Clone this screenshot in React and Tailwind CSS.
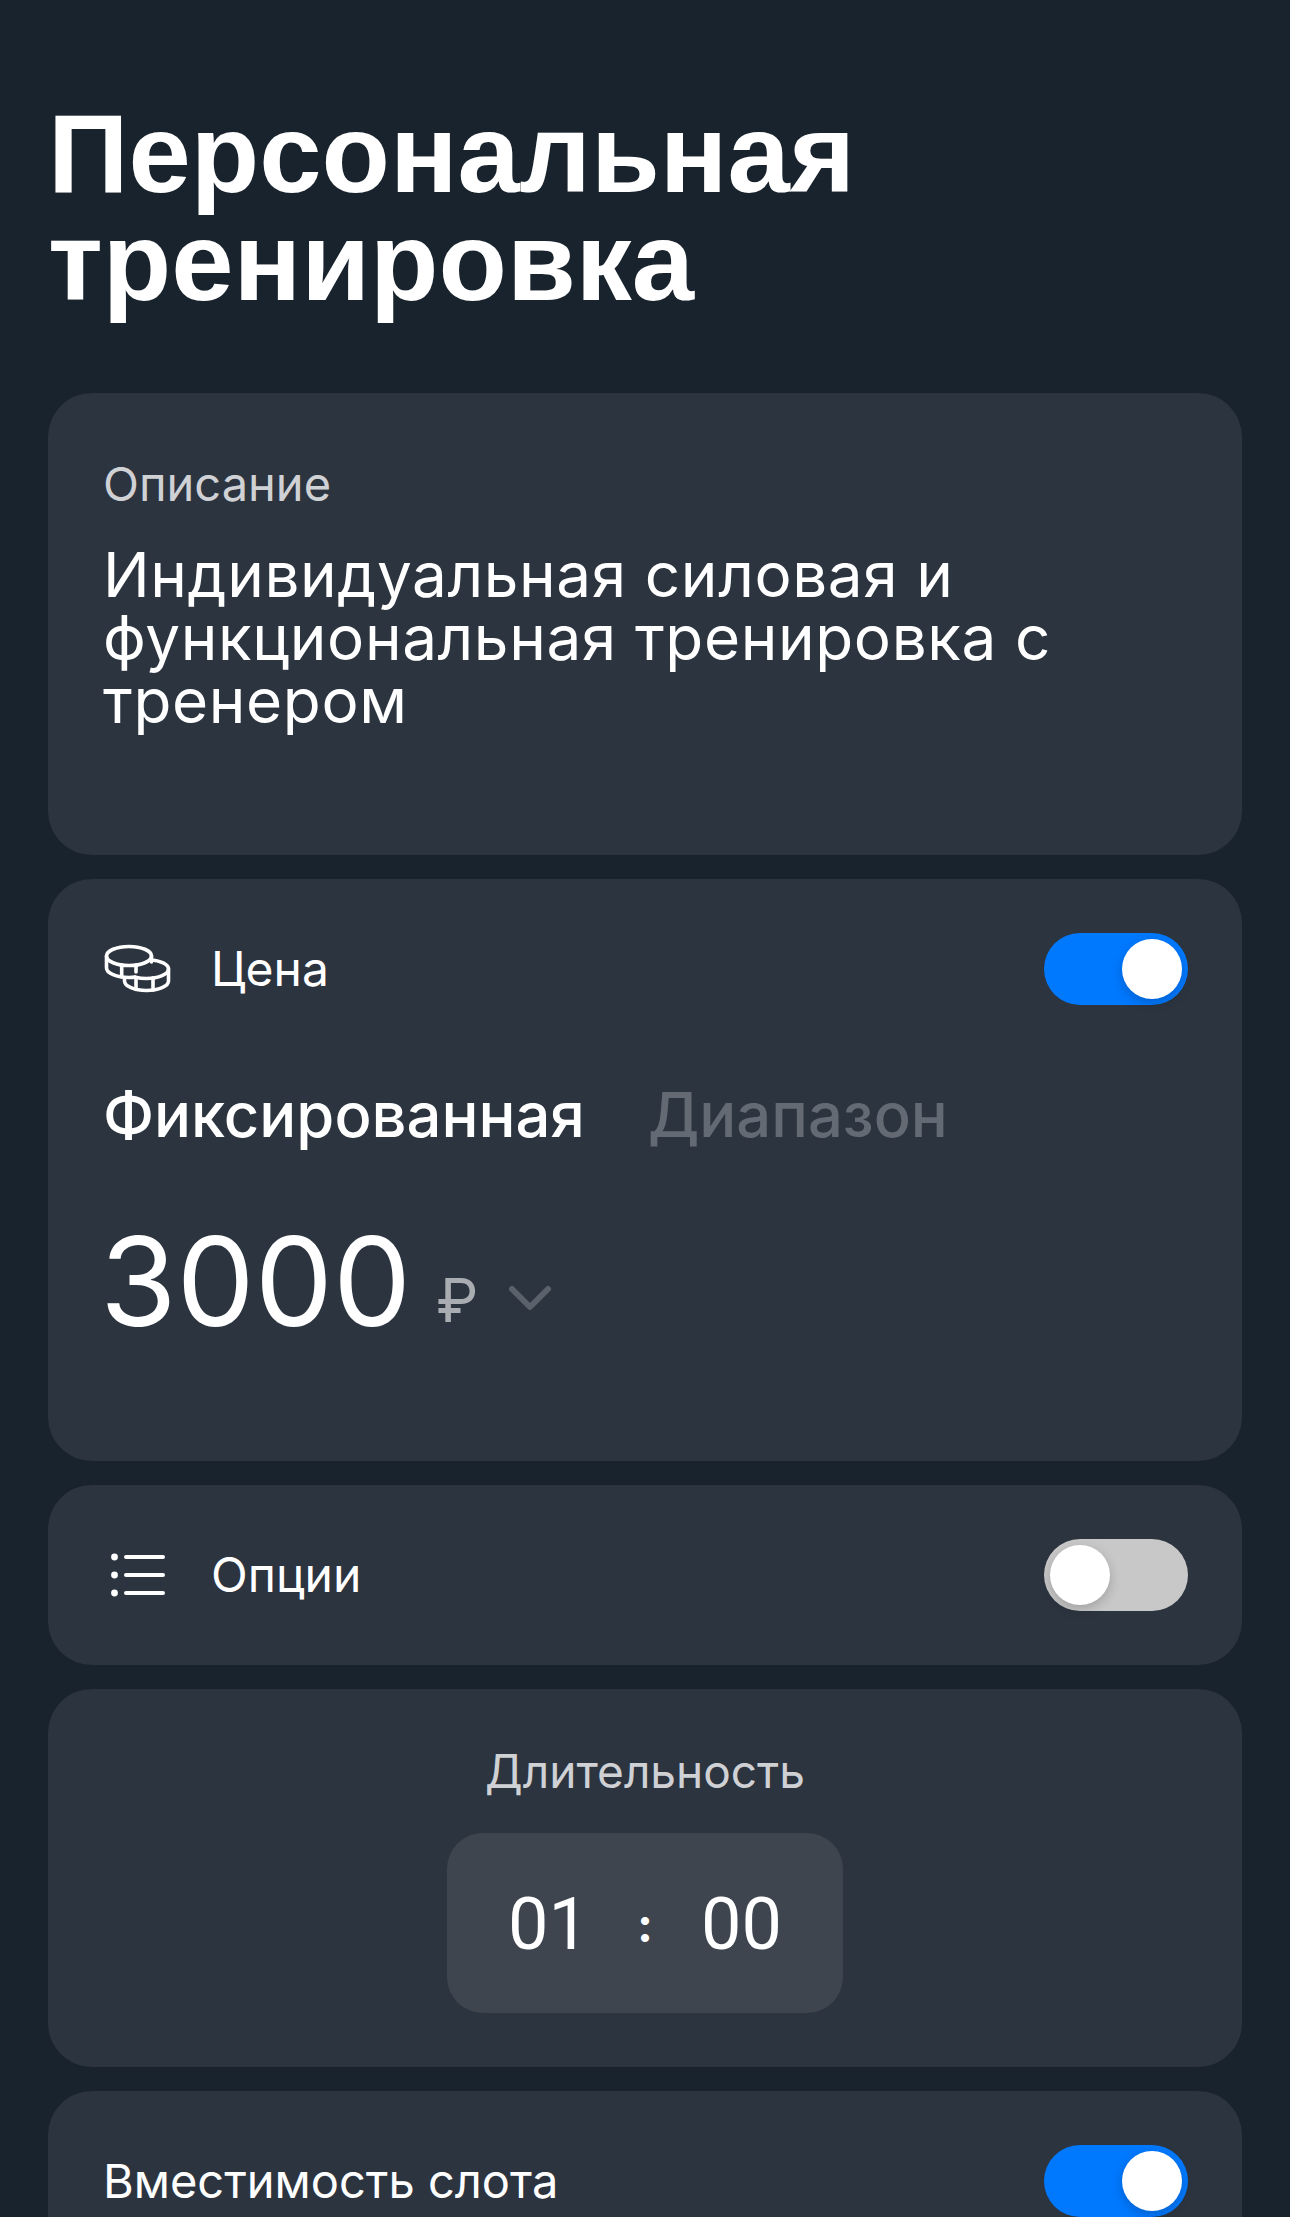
const FONT = "font-['Inter',sans-serif]"

function Toggle({ on }) {
  return (
    <div className={`relative h-[72px] w-[144px] shrink-0 rounded-full ${on ? 'bg-[#0079ff]' : 'bg-[#c8c8c8]'}`}>
      <div
        className={`absolute top-[6px] h-[60px] w-[60px] rounded-full bg-white shadow-[0_4px_12px_rgba(0,0,0,0.2)] ${on ? 'right-[6px]' : 'left-[6px]'}`}
      />
    </div>
  )
}

function CoinsIcon() {
  return (
    <svg width="70" height="50" viewBox="0 0 70 50" fill="none" stroke="white" strokeWidth="3.600" strokeLinejoin="round" strokeLinecap="round">
      {/* left coin */}
      <ellipse cx="26" cy="12" rx="22.500" ry="9.500" />
      <path d="M3.500 12v12c0 5.200 10 9.500 22.500 9.500 2 0 4-.1 6-.4M48.500 12v6" />
      <path d="M18.700 21v12M33 21v7" />
      {/* right coin */}
      <path d="M47 15.700c10.500.8 18.500 4.600 18.500 9.300 0 5.200-9.800 9.500-22 9.500-4 0-7.800-.5-11-1.300" />
      <path d="M21.500 35v2c0 5.200 9.800 9.500 22 9.500s22-4.300 22-9.500V25" />
      <path d="M33 34v11.500M50 34v12" />
    </svg>
  )
}

function ListIcon() {
  return (
    <svg width="54" height="44" viewBox="0 0 54 44" fill="white">
      <circle cx="3.500" cy="4" r="3.400" />
      <circle cx="3.500" cy="22" r="3.400" />
      <circle cx="3.500" cy="40" r="3.400" />
      <rect x="13" y="2" width="41" height="4" rx="2" />
      <rect x="13" y="20" width="41" height="4" rx="2" />
      <rect x="13" y="38" width="41" height="4" rx="2" />
    </svg>
  )
}

function Card({ className = '', children }) {
  return <section className={`rounded-[44px] bg-[#2c343f] ${className}`}>{children}</section>
}

export default function App() {
  return (
    <div className={`h-[2217px] overflow-hidden bg-[#19232d] px-[48px] pt-[100px] text-white ${FONT}`}>
      <h1 className="font-['Liberation_Sans',sans-serif] text-[112px] leading-[108px] font-bold">
        Персональная тренировка
      </h1>

      <div className="mt-[77px] flex flex-col gap-[24px]">
        <Card className="h-[462px] pr-[54px] pl-[55px] pt-[65px]">
          <p className="text-[47px] leading-[52px] text-[#cfd1d4]">Описание</p>
          <p className="mt-[33px] text-[62px] leading-[63px] tracking-[0.01em]">
            Индивидуальная силовая и функциональная тренировка с тренером
          </p>
        </Card>

        <Card className="h-[582px] pr-[54px] pl-[55px] pt-[54px]">
          <div className="flex items-center justify-between">
            <div className="flex items-center gap-[38px]">
              <CoinsIcon />
              <span className="text-[48px]">Цена</span>
            </div>
            <Toggle on />
          </div>
          <div className="mt-[76px] flex gap-[63px] text-[61.5px] leading-[68px] font-medium">
            <span>Фиксированная</span>
            <span className="text-[#646a73]">Диапазон</span>
          </div>
          <div className="mt-[62px] -ml-[3px] flex items-center">
            <span className="text-[124px] leading-[140px]">3000</span>
            <span className="mt-[38px] ml-[25px] text-[60px] leading-[64px] text-[#a9acb1]">₽</span>
            <svg className="mt-[36px] ml-[31px]" width="42" height="28" viewBox="0 0 42 28" fill="none" stroke="#5a616b" strokeWidth="6" strokeLinecap="round" strokeLinejoin="round">
              <path d="M3 4l18 18L39 4" />
            </svg>
          </div>
        </Card>

        <Card className="flex h-[180px] items-center justify-between pr-[54px] pl-[55px]">
          <div className="flex items-center gap-[46px]">
            <div className="pl-[8px]"><ListIcon /></div>
            <span className="text-[48px]">Опции</span>
          </div>
          <Toggle />
        </Card>

        <Card className="flex h-[378px] flex-col items-center pt-[50px]">
          <p className="text-[46px] leading-[64px] text-[#cfd1d4]">Длительность</p>
          <div className="mt-[30px] flex h-[180px] w-[396px] items-center justify-center gap-[48px] rounded-[36px] bg-[#3e454f] pt-[4px] font-['Roboto',sans-serif] text-[72px]">
            <span>01</span>
            <span className="font-['Inter',sans-serif] text-[48px] font-bold">:</span>
            <span>00</span>
          </div>
        </Card>

        <Card className="flex h-[200px] items-start justify-between pr-[54px] pl-[55px] pt-[54px]">
          <span className="text-[47px] leading-[72px]">Вместимость слота</span>
          <Toggle on />
        </Card>
      </div>
    </div>
  )
}
